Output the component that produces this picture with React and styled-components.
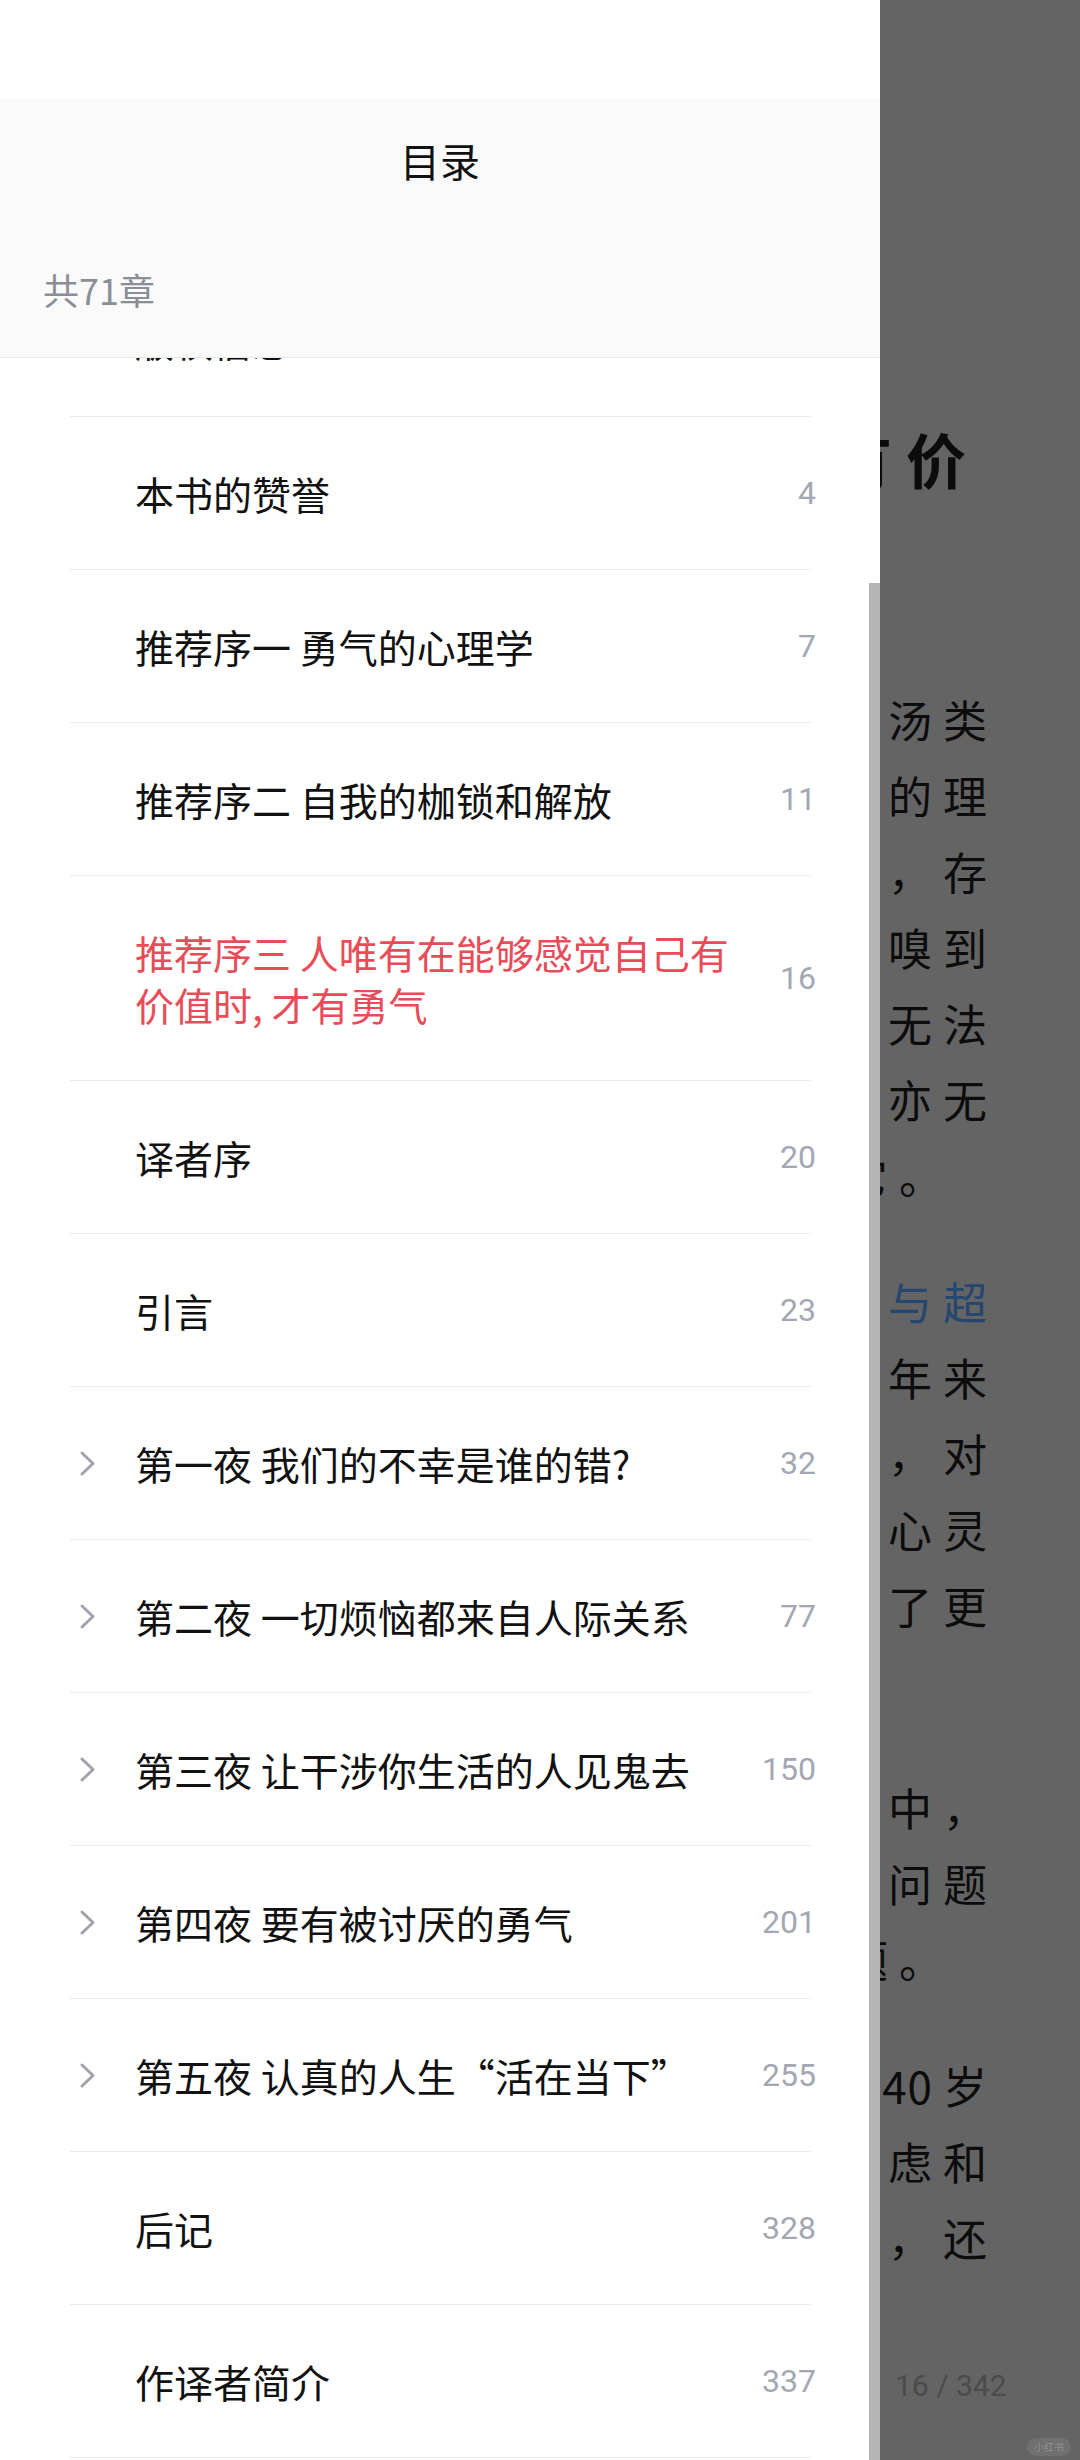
import React from "react";
import styled, { createGlobalStyle } from "styled-components";

const GlobalStyle = createGlobalStyle`
  html, body { margin: 0; padding: 0; }
  body {
    width: 1080px;
    height: 2460px;
    overflow: hidden;
    font-family: "Noto Sans CJK SC", "Noto Sans", sans-serif;
  }
`;

const Screen = styled.div`
  position: relative;
  width: 1080px;
  height: 2460px;
  overflow: hidden;
  background: #646464;
`;

/* ---------- dimmed book page behind the drawer ---------- */
const BookPage = styled.div`
  display: flex;
  flex-direction: column;
  align-items: flex-end;
  padding-top: 418px;
  color: #0c0c0c;
  font-family: "Noto Sans CJK SC", "Noto Sans", serif;
`;

const BookTitle = styled.div`
  font-size: 60px;
  line-height: 80px;
  font-weight: 700;
  letter-spacing: 14px;
  padding-right: 100px;
  margin-bottom: 183px;
  white-space: nowrap;
`;

const Paragraph = styled.div`
  display: flex;
  flex-direction: column;
  align-items: flex-end;
  margin-bottom: ${(p) => 50 + (p.$extra || 0)}px;
`;

const BookLine = styled.div`
  font-size: 44px;
  line-height: 76px;
  letter-spacing: 11px;
  white-space: nowrap;
  padding-right: ${(p) => 82 + (p.$shift || 0)}px;
  color: ${(p) => (p.$link ? "#24466f" : "inherit")};
`;

const Digits = styled.span`
  letter-spacing: 1px;
  margin-right: 10px;
`;

const PageIndicator = styled.div`
  position: absolute;
  left: 895px;
  top: 2368px;
  font-family: Roboto, "Noto Sans", sans-serif;
  font-size: 30px;
  color: #4b4b4b;
  white-space: nowrap;
`;

const Watermark = styled.div`
  position: absolute;
  right: 9px;
  bottom: 4px;
  padding: 2px 7px;
  border-radius: 10px;
  background: rgba(255, 255, 255, 0.08);
  color: rgba(255, 255, 255, 0.25);
  font-size: 10px;
  line-height: 14px;
`;

/* ---------- drawer ---------- */
const Drawer = styled.aside`
  position: absolute;
  left: 0;
  top: 0;
  width: 880px;
  height: 2460px;
  background: #ffffff;
  display: flex;
  flex-direction: column;
`;

const StatusArea = styled.div`
  height: 99px;
  flex: none;
  background: #ffffff;
`;

const Header = styled.header`
  flex: none;
  background: #fafafa;
  border-bottom: 1px solid #e8e8e8;
  display: flex;
  flex-direction: column;
`;

const TitleRow = styled.div`
  height: 122px;
  display: flex;
  align-items: center;
  justify-content: center;
  font-size: 40px;
  color: #111111;
`;

const CountRow = styled.div`
  height: 136px;
  display: flex;
  align-items: center;
  padding-left: 43px;
  font-size: 36px;
  color: #8b8e97;
`;

const ListViewport = styled.div`
  flex: 1;
  overflow: hidden;
`;

const List = styled.ul`
  list-style: none;
  margin: -94px 0 0;
  padding: 0 64px 0 70px;
`;

const Row = styled.li`
  display: grid;
  grid-template-columns: 33px 1fr auto;
  column-gap: 32px;
  align-items: center;
  padding: 50px 0 51px;
  background: linear-gradient(#ebebeb, #ebebeb) no-repeat left bottom / calc(100% - 5px) 1px;
`;

const ChevronSlot = styled.span`
  display: flex;
  align-items: center;
  padding-left: 9px;
  height: 52px;
`;

const RowTitle = styled.span`
  font-size: 39px;
  line-height: 52px;
  color: ${(p) => (p.$active ? "#e84c58" : "#111111")};
`;

const PageNum = styled.span`
  font-family: Roboto, "Noto Sans", sans-serif;
  font-size: 32px;
  color: #a3a7b3;
  text-align: right;
`;

const ScrollThumb = styled.div`
  position: absolute;
  right: 0;
  top: 583px;
  bottom: 0;
  width: 11px;
  background: #b4b4b4;
`;

const Chevron = () => (
  <svg width="17" height="27" viewBox="0 0 17 27" fill="none">
    <polyline
      points="3,3 14,13.5 3,24"
      stroke="#a0a3ad"
      strokeWidth="3"
      strokeLinecap="round"
      strokeLinejoin="round"
    />
  </svg>
);

const chapters = [
  { title: "版权信息", page: "" },
  { title: "本书的赞誉", page: "4" },
  { title: "推荐序一 勇气的心理学", page: "7" },
  { title: "推荐序二 自我的枷锁和解放", page: "11" },
  { title: "推荐序三 人唯有在能够感觉自己有价值时, 才有勇气", page: "16", active: true },
  { title: "译者序", page: "20" },
  { title: "引言", page: "23" },
  { title: "第一夜 我们的不幸是谁的错?", page: "32", expandable: true },
  { title: "第二夜 一切烦恼都来自人际关系", page: "77", expandable: true },
  { title: "第三夜 让干涉你生活的人见鬼去", page: "150", expandable: true },
  { title: "第四夜 要有被讨厌的勇气", page: "201", expandable: true },
  { title: "第五夜 认真的人生“活在当下”", page: "255", expandable: true },
  { title: "后记", page: "328" },
  { title: "作译者简介", page: "337" },
];

/* only the tail of each line is visible to the right of the drawer */
const paragraphs = [
  {
    lines: [
      { t: "汤类" },
      { t: "的理" },
      { t: "，存" },
      { t: "嗅到" },
      { t: "无法" },
      { t: "亦无" },
      { t: "它。", shift: 44 },
    ],
  },
  {
    extra: 76,
    lines: [
      { t: "与超", link: true },
      { t: "年来" },
      { t: "，对" },
      { t: "心灵" },
      { t: "了更" },
    ],
  },
  {
    lines: [{ t: "中，" }, { t: "问题" }, { t: "题。", shift: 44 }],
  },
  {
    lines: [{ num: "40", t: "岁" }, { t: "虑和" }, { t: "，还" }],
  },
];

export default function App() {
  return (
    <>
      <GlobalStyle />
      <Screen>
        <BookPage>
          <BookTitle>有价</BookTitle>
          {paragraphs.map((p, i) => (
            <Paragraph key={i} $extra={p.extra}>
              {p.lines.map((l, j) => (
                <BookLine key={j} $shift={l.shift} $link={l.link}>
                  {l.num ? <Digits>{l.num}</Digits> : null}
                  {l.t}
                </BookLine>
              ))}
            </Paragraph>
          ))}
        </BookPage>
        <PageIndicator>16 / 342</PageIndicator>
        <Watermark>小红书</Watermark>

        <Drawer>
          <StatusArea />
          <Header>
            <TitleRow>目录</TitleRow>
            <CountRow>共71章</CountRow>
          </Header>
          <ListViewport>
            <List>
              {chapters.map((c, i) => (
                <Row key={i}>
                  <ChevronSlot>{c.expandable ? <Chevron /> : null}</ChevronSlot>
                  <RowTitle $active={c.active}>{c.title}</RowTitle>
                  <PageNum>{c.page}</PageNum>
                </Row>
              ))}
            </List>
          </ListViewport>
          <ScrollThumb />
        </Drawer>
      </Screen>
    </>
  );
}
